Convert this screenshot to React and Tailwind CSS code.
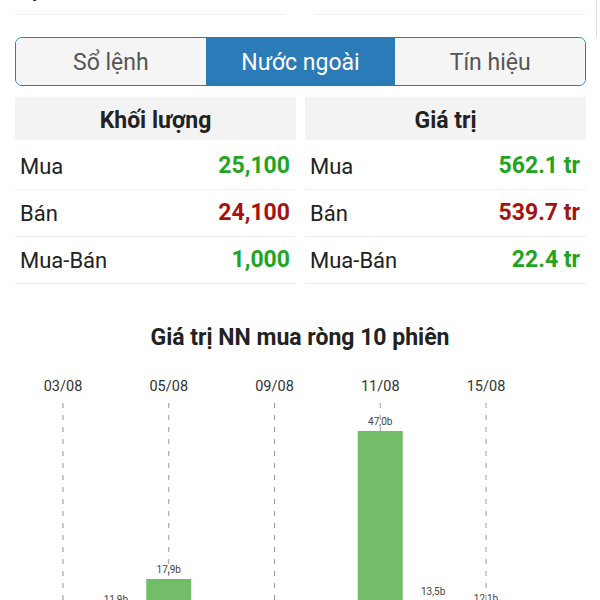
import React, { useState } from 'react';

const tabs = ['Sổ lệnh', 'Nước ngoài', 'Tín hiệu'];

const volumeRows = [
  { label: 'Mua', value: '25,100', color: 'text-[#1fa51f]' },
  { label: 'Bán', value: '24,100', color: 'text-[#a51212]' },
  { label: 'Mua-Bán', value: '1,000', color: 'text-[#1fa51f]' },
];

const valueRows = [
  { label: 'Mua', value: '562.1 tr', color: 'text-[#1fa51f]' },
  { label: 'Bán', value: '539.7 tr', color: 'text-[#a51212]' },
  { label: 'Mua-Bán', value: '22.4 tr', color: 'text-[#1fa51f]' },
];

// 10 phiên gần nhất (tỷ đồng)
const sessions = [
  { date: '03/08', value: 5.2, label: true },
  { date: '04/08', value: 11.9 },
  { date: '05/08', value: 17.9, label: true },
  { date: '08/08', value: 3.4 },
  { date: '09/08', value: 8.1, label: true },
  { date: '10/08', value: 6.7 },
  { date: '11/08', value: 47.0, label: true },
  { date: '12/08', value: 13.5 },
  { date: '15/08', value: 12.1, label: true },
  { date: '16/08', value: 9.8 },
];

const StatTable = ({ title, rows }) => (
  <div>
    <div className="h-[43px] pt-[5px] bg-[#f3f3f3] flex items-center justify-center text-[23px] font-bold text-[#222]">
      {title}
    </div>
    <div className="mt-[3px]">
      {rows.map((row) => (
        <div key={row.label} className="h-[47px] flex items-center justify-between pl-[5px] pr-[6px] border-b border-[#eeeeee]">
          <span className="text-[22px] text-[#222]">{row.label}</span>
          <span className={`text-[23px] font-bold ${row.color}`}>{row.value}</span>
        </div>
      ))}
    </div>
  </div>
);

const NetBuyChart = () => {
  const startX = 63;
  const step = 52.875;
  const base = 318;
  const scale = 5.086;
  const barW = 45;

  return (
    <svg width="600" height="320" viewBox="0 0 600 320" className="block">
      {sessions.map((s, i) =>
        s.label ? (
          <g key={s.date}>
            <text x={startX + i * step} y="39" textAnchor="middle" fontSize="14.5" fill="#333" fontFamily="Roboto, sans-serif">
              {s.date}
            </text>
            <line x1={startX + i * step} y1="51" x2={startX + i * step} y2={base} stroke="#9a9a9a" strokeWidth="1" strokeDasharray="5 7" />
          </g>
        ) : null
      )}
      {sessions.map((s, i) => {
        const h = s.value * scale;
        const x = startX + i * step;
        return (
          <g key={`bar-${s.date}`}>
            <rect x={x - barW / 2} y={base - h} width={barW} height={h} fill="#73bd69" />
            <text x={x} y={base - h - 6} textAnchor="middle" fontSize="10" fill="#444" fontFamily="Roboto, sans-serif">
              {s.value.toFixed(1).replace('.', ',')}b
            </text>
          </g>
        );
      })}
    </svg>
  );
};

export default function App() {
  const [activeTab, setActiveTab] = useState(1);

  return (
    <div className="w-[600px] h-[600px] overflow-hidden bg-white font-['Roboto',sans-serif]">
      {/* Hàng cuối của bảng phía trên (bị cuộn khuất) */}
      <div className="w-[597px] h-[37px] border-r border-[#dddddd]">
        <div className="h-[15px] overflow-hidden flex items-end">
          <div className="w-full flex pl-[15px] pr-[11px] gap-[30px]">
            <div className="flex-1 h-[48px] pb-[5px] flex items-center justify-between px-[5px] border-b border-[#eeeeee]">
              <span className="text-[22px] text-[#222]">Tỷ lệ</span>
              <span className="text-[23px] font-bold text-[#222]">2.65</span>
            </div>
            <div className="flex-1 h-[48px] pb-[4px] flex items-center justify-between px-[5px] border-b border-[#eeeeee]">
              <span className="text-[22px] text-[#222]">Room</span>
              <span className="text-[23px] font-bold text-[#222]">43,200</span>
            </div>
          </div>
        </div>
      </div>

      {/* Tabs */}
      <div className="px-[15px] pr-[14px]">
        <div className="h-[49px] grid grid-cols-3 border-[1.5px] border-[#2a7ab6] rounded-[7px] overflow-hidden">
          {tabs.map((tab, i) => (
            <button
              key={tab}
              onClick={() => setActiveTab(i)}
              className={`flex items-center justify-center pt-[4px] text-[23px] ${
                activeTab === i ? 'bg-[#2b7bb9] text-white' : 'bg-[#f5f5f5] text-[#555]'
              }`}
            >
              {tab}
            </button>
          ))}
        </div>
      </div>

      {/* Khối lượng / Giá trị */}
      <div className="mt-[11px] px-[15px] pr-[14px] grid grid-cols-2 gap-x-[9px]">
        <StatTable title="Khối lượng" rows={volumeRows} />
        <StatTable title="Giá trị" rows={valueRows} />
      </div>

      {/* Biểu đồ */}
      <div className="mt-[38px] h-[30px] pt-[2px] flex items-center justify-center text-[23px] font-bold text-[#222]">
        Giá trị NN mua ròng 10 phiên
      </div>
      <NetBuyChart />
    </div>
  );
}
